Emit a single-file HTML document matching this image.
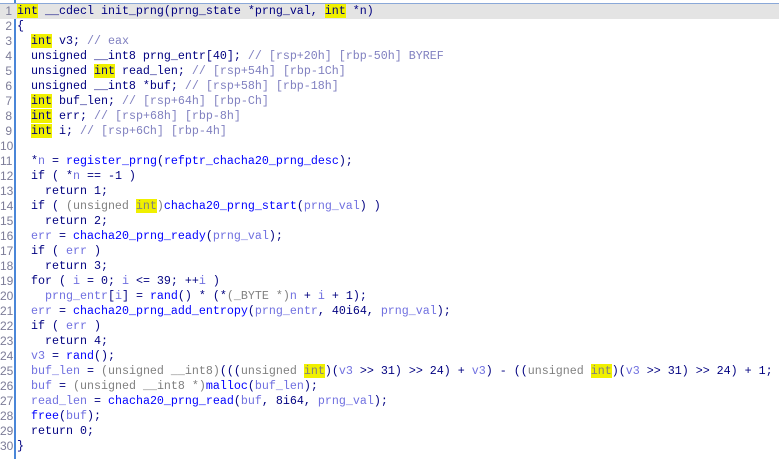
<!DOCTYPE html>
<html><head><meta charset="utf-8"><style>
html,body{margin:0;padding:0;background:#fff;width:779px;height:459px;overflow:hidden}
.w{position:relative;top:4px}
.l{height:15px;line-height:15px;white-space:pre;font-family:"Liberation Mono",monospace;font-size:11.67px;color:#000080;position:relative}
.n{position:absolute;left:0;width:12px;text-align:right;color:#7c7c98;font-size:12px;font-family:"Liberation Sans",sans-serif}
.t{position:absolute;left:17px}
.g{position:absolute;left:14px;top:0;width:2px;height:459px;background:#4a86d8}
.cur{background:#e4e4e4;border-top:1px solid #8aa8d8;margin-top:-1px}
.v{color:#7070e0}.f{color:#0000ff}.c{color:#808080}.m{color:#8080c0}
.h{background:#f0f000}
</style></head><body>
<div class="g"></div>
<div class="w">
<div class="l cur"><span class="n">1</span><span class="t"><span class="h">int</span> __cdecl init_prng(prng_state *prng_val, <span class="h">int</span> *n)</span></div>
<div class="l"><span class="n">2</span><span class="t">{</span></div>
<div class="l"><span class="n">3</span><span class="t">  <span class="h">int</span> v3; <span class="m">// eax</span></span></div>
<div class="l"><span class="n">4</span><span class="t">  unsigned __int8 prng_entr[40]; <span class="m">// [rsp+20h] [rbp-50h] BYREF</span></span></div>
<div class="l"><span class="n">5</span><span class="t">  unsigned <span class="h">int</span> read_len; <span class="m">// [rsp+54h] [rbp-1Ch]</span></span></div>
<div class="l"><span class="n">6</span><span class="t">  unsigned __int8 *buf; <span class="m">// [rsp+58h] [rbp-18h]</span></span></div>
<div class="l"><span class="n">7</span><span class="t">  <span class="h">int</span> buf_len; <span class="m">// [rsp+64h] [rbp-Ch]</span></span></div>
<div class="l"><span class="n">8</span><span class="t">  <span class="h">int</span> err; <span class="m">// [rsp+68h] [rbp-8h]</span></span></div>
<div class="l"><span class="n">9</span><span class="t">  <span class="h">int</span> i; <span class="m">// [rsp+6Ch] [rbp-4h]</span></span></div>
<div class="l"><span class="n">10</span><span class="t"></span></div>
<div class="l"><span class="n">11</span><span class="t">  *<span class="v">n</span> = <span class="f">register_prng</span>(<span class="f">refptr_chacha20_prng_desc</span>);</span></div>
<div class="l"><span class="n">12</span><span class="t">  if ( *<span class="v">n</span> == -1 )</span></div>
<div class="l"><span class="n">13</span><span class="t">    return 1;</span></div>
<div class="l"><span class="n">14</span><span class="t">  if ( <span class="c">(unsigned </span><span class="h c">int</span><span class="c">)</span><span class="f">chacha20_prng_start</span>(<span class="v">prng_val</span>) )</span></div>
<div class="l"><span class="n">15</span><span class="t">    return 2;</span></div>
<div class="l"><span class="n">16</span><span class="t">  <span class="v">err</span> = <span class="f">chacha20_prng_ready</span>(<span class="v">prng_val</span>);</span></div>
<div class="l"><span class="n">17</span><span class="t">  if ( <span class="v">err</span> )</span></div>
<div class="l"><span class="n">18</span><span class="t">    return 3;</span></div>
<div class="l"><span class="n">19</span><span class="t">  for ( <span class="v">i</span> = 0; <span class="v">i</span> &lt;= 39; ++<span class="v">i</span> )</span></div>
<div class="l"><span class="n">20</span><span class="t">    <span class="v">prng_entr</span>[<span class="v">i</span>] = <span class="f">rand</span>() * (*<span class="c">(_BYTE *)</span><span class="v">n</span> + <span class="v">i</span> + 1);</span></div>
<div class="l"><span class="n">21</span><span class="t">  <span class="v">err</span> = <span class="f">chacha20_prng_add_entropy</span>(<span class="v">prng_entr</span>, 40i64, <span class="v">prng_val</span>);</span></div>
<div class="l"><span class="n">22</span><span class="t">  if ( <span class="v">err</span> )</span></div>
<div class="l"><span class="n">23</span><span class="t">    return 4;</span></div>
<div class="l"><span class="n">24</span><span class="t">  <span class="v">v3</span> = <span class="f">rand</span>();</span></div>
<div class="l"><span class="n">25</span><span class="t">  <span class="v">buf_len</span> = <span class="c">(unsigned __int8)</span>(((<span class="c">unsigned </span><span class="h c">int</span>)(<span class="v">v3</span> &gt;&gt; 31) &gt;&gt; 24) + <span class="v">v3</span>) - ((<span class="c">unsigned </span><span class="h c">int</span>)(<span class="v">v3</span> &gt;&gt; 31) &gt;&gt; 24) + 1;</span></div>
<div class="l"><span class="n">26</span><span class="t">  <span class="v">buf</span> = <span class="c">(unsigned __int8 *)</span><span class="f">malloc</span>(<span class="v">buf_len</span>);</span></div>
<div class="l"><span class="n">27</span><span class="t">  <span class="v">read_len</span> = <span class="f">chacha20_prng_read</span>(<span class="v">buf</span>, 8i64, <span class="v">prng_val</span>);</span></div>
<div class="l"><span class="n">28</span><span class="t">  <span class="f">free</span>(<span class="v">buf</span>);</span></div>
<div class="l"><span class="n">29</span><span class="t">  return 0;</span></div>
<div class="l"><span class="n">30</span><span class="t">}</span></div>
</div>
</body></html>
